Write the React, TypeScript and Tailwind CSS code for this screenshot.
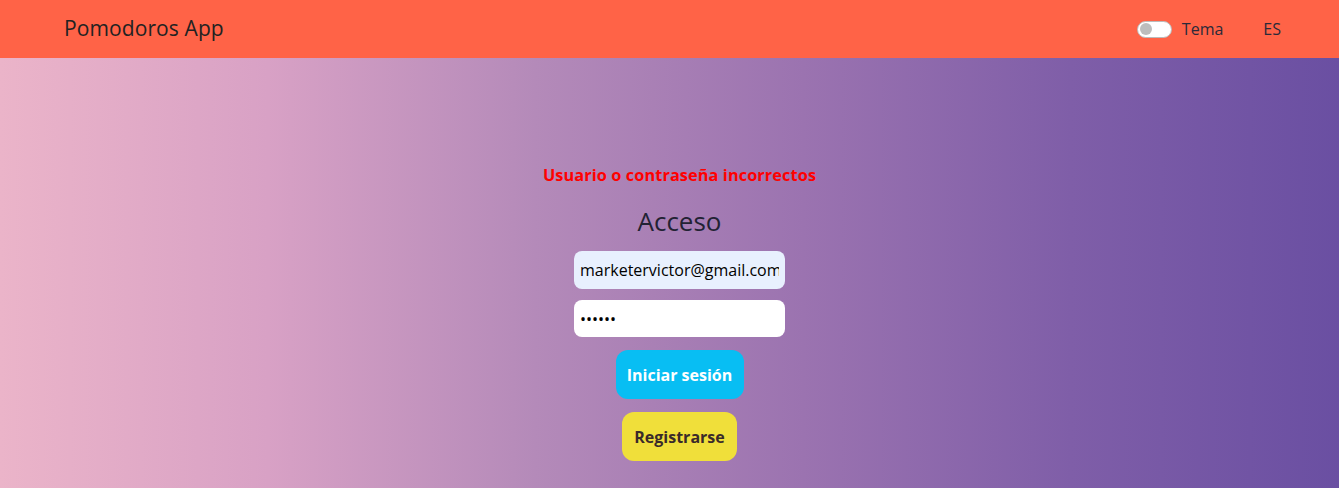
import React from "react";

export default function App() {
  return (
    <div className="min-h-screen flex flex-col font-['Open_Sans',sans-serif]">
      <header className="h-[58px] bg-[#ff6347] flex items-center justify-between pl-[64px] pr-[58px] shrink-0">
        <span className="text-[21px] text-[#222] tracking-[0.1px] leading-[28px] mb-[2px]">Pomodoros App</span>
        <div className="flex items-center">
          <div className="w-[35px] h-[17px] rounded-full bg-white border border-[#bbb] flex items-center px-[2px]">
            <div className="w-[12px] h-[12px] rounded-full bg-[#bdbdbd]" />
          </div>
          <span className="ml-[10px] text-[16px] text-[#2a2a3a]">Tema</span>
          <span className="ml-[40px] text-[16px] text-[#2a2a3a]">ES</span>
        </div>
      </header>
      <main className="flex-1 bg-[linear-gradient(to_right,#ebb4c9_0%,#d8a1c5_20%,#b48ab9_40%,#9b73b0_60%,#7f5ea8_80%,#6a4fa2_100%)] flex flex-col items-center pt-[106px] pb-[27px] pl-[20px]">
        <p className="text-[16.3px] font-bold text-[#ff0000] leading-[22px] tracking-[0.1px]">Usuario o contraseña incorrectos</p>
        <h2 className="mt-[19px] text-[26px] text-[#222233] leading-[32px] mb-[2px]">Acceso</h2>
        <input
          className="mt-[12px] w-[211px] h-[38px] rounded-[8px] bg-[#e8f0fe] px-[6px] text-[16px] text-black outline-none"
          defaultValue="marketervictor@gmail.com"
        />
        <input
          type="password"
          className="mt-[11px] w-[211px] h-[37px] rounded-[8px] bg-white px-[6px] text-[16px] text-black outline-none"
          defaultValue="123456"
        />
        <button className="mt-[13px] w-[128px] h-[49px] rounded-[12px] bg-[#08bef3] text-white font-bold text-[16px]">
          Iniciar sesión
        </button>
        <button className="mt-[13px] w-[115px] h-[49px] rounded-[12px] bg-[#f0df3a] text-[#3a2a2a] font-bold text-[16px]">
          Registrarse
        </button>
      </main>
    </div>
  );
}
